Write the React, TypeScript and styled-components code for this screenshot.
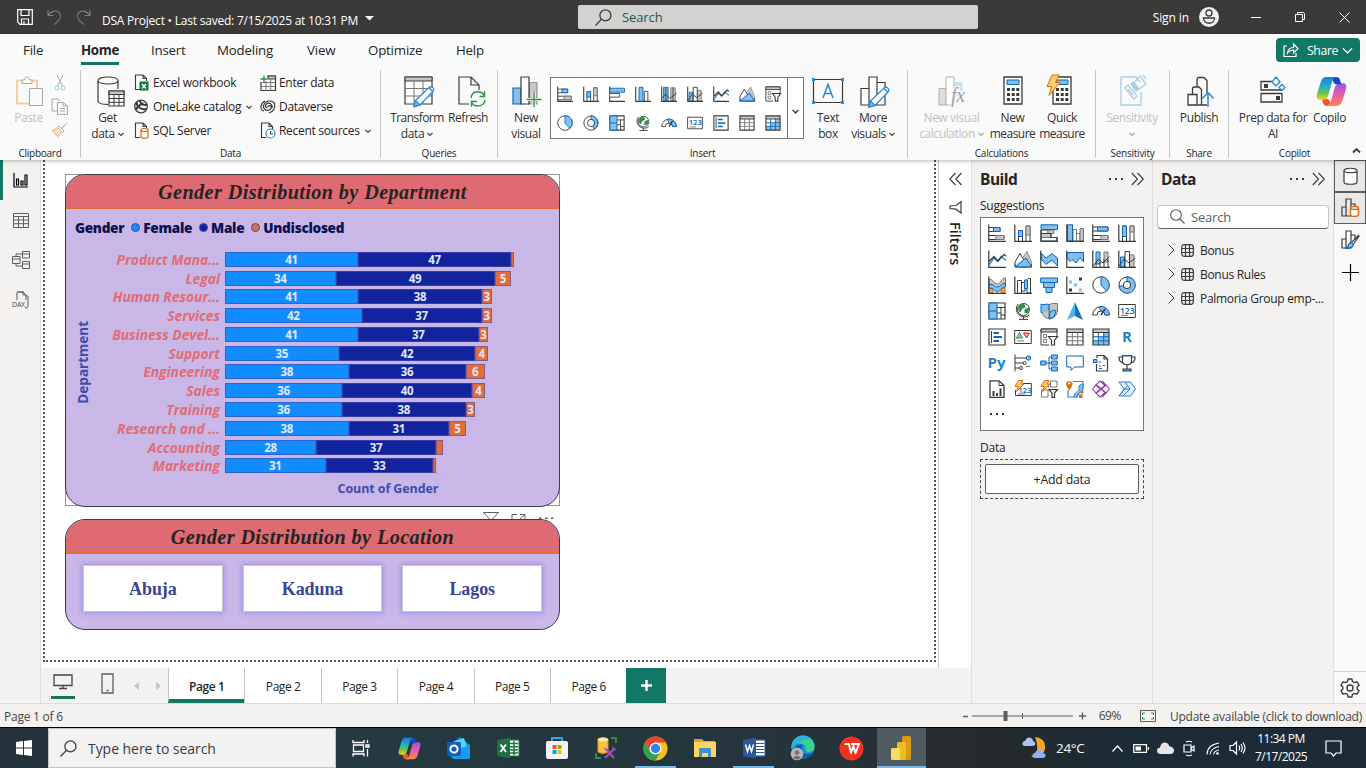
import React from "react";
import styled, { createGlobalStyle, css } from "styled-components";

const INK = "#3b3a39";
const BLUE = "#0f66b5";
const SKY = "#83beec";
const GREY = "#c8c6c4";
const TEAL = "#117865";
const ORANGE = "#d86f0e";
const GREEN = "#2f8f46";

const Global = createGlobalStyle`
  * { box-sizing: border-box; }
  body { margin: 0; overflow: hidden; background: #fff; }
  #root { font-family: "Open Sans", "Noto Sans", sans-serif; font-size: 12px; color: #252423; }
`;

const Window = styled.div`
  width: 1366px;
  height: 768px;
  display: flex;
  flex-direction: column;
  overflow: hidden;
  letter-spacing: -0.2px;
  white-space: nowrap;
`;

/* ---------- svg helpers ---------- */

type GlyphProps = { w: number; h?: number; vb?: string; children: React.ReactNode; sw?: number; color?: string };
const GlyphSvg = styled.svg`
  display: block;
  flex: none;
  overflow: visible;
`;
const Glyph = ({ w, h = w, vb, children, sw = 1, color = INK }: GlyphProps) => (
  <GlyphSvg width={w} height={h} viewBox={vb ?? `0 0 ${w} ${h}`} fill="none" stroke={color} strokeWidth={sw}>
    {children}
  </GlyphSvg>
);
const Axis = () => <path d="M.8 .5V17.300H18" stroke={INK} strokeWidth="1.200" />;
const Grid = ({ fill = false }: { fill?: boolean }) => (
  <>
    <path d="M1 1H17V4.500H1Z" fill={GREY} stroke="none" />
    {fill && <path d="M6.500 9H17V17H1V13H6.500ZM11.500 4.500H17V9H11.500Z" fill={SKY} stroke="none" />}
    <path d="M1 8.700H17M1 12.800H17M6.300 4.500V17M11.700 4.500V17" stroke={fill ? BLUE : "#797775"} />
    <path d="M1 4.500H17" />
    <path d="M1 1H17V17H1Z" strokeWidth="1.200" />
  </>
);
const Bolt = () => <path d="M4.500 .5H9L7 4H10L2.500 11.500 4.300 6.500H1Z" fill="#ffc966" stroke={ORANGE} />;
const num = (s: string, x: number, y: number, size: number, fill = BLUE, weight = 600) => (
  <text x={x} y={y} fontSize={size} fontFamily="Open Sans, sans-serif" fontWeight={weight} fill={fill} stroke="none" letterSpacing="0">{s}</text>
);

const viz: Record<string, React.ReactNode> = {
  stackedBar: <><Axis /><path d="M1 3.500H12V7.500H1" /><path d="M5.500 3.500H12V7.500H5.500Z" fill={SKY} stroke={BLUE} /><path d="M1 11.500H16V15.500H1" /><path d="M8 11.500H16V15.500H8Z" fill={GREY} stroke="#797775" /></>,
  stackedCol: <><Axis /><path d="M4.500 17V6.500H8.500V17" /><path d="M4.500 6.500H8.500V12.500H4.500Z" fill={SKY} stroke={BLUE} /><path d="M12 17V2H16V17" /><path d="M12 2H16V11H12Z" fill={GREY} stroke="#797775" /></>,
  clusterBar: <><Axis /><path d="M1 8.500H12V12.500H1" fill="#fff" /><path d="M1 2.500H17.500V7H1Z" fill={SKY} stroke={BLUE} /></>,
  clusterCol: <><Axis /><path d="M10.500 17V6H14.500V17" /><path d="M4.500 17V1.500H9V17Z" fill={SKY} stroke={BLUE} /></>,
  hBars: <><path d="M1 6H8V9.500H1ZM1 13.500H17V17H1Z" fill="#fff" /><path d="M8 6H14V9.500H8ZM1 9.500H11V13.500H1Z" fill={GREY} stroke="#797775" /><path d="M1 6V17.300H18M1 9.500H11V13.500H17V17" strokeWidth="1.200" /><path d="M1 .8H17.500V5.500H1Z" fill={SKY} stroke={BLUE} /></>,
  vBars: <><path d="M7 5.500H10.500V17H7ZM10.500 9.500H14V17H10.500Z" fill="#fff" stroke="#797775" /><path d="M14 4.500H17.500V17H14Z" fill={GREY} stroke="#797775" /><path d="M1.500 .8H6.500V17H1.500Z" fill={SKY} stroke={BLUE} /><Axis /></>,
  fullBar: <><Axis /><path d="M1 3H16V7H1M1 11.500H16V15.500H1" /><path d="M5.500 3H16V7H5.500Z" fill={SKY} stroke={BLUE} /><path d="M9 11.500H16V15.500H9Z" fill={GREY} stroke="#797775" /></>,
  fullCol: <><Axis /><path d="M4.500 17V2H8.500V17M12 17V2H16V17" /><path d="M4.500 2H8.500V12.500H4.500Z" fill={SKY} stroke={BLUE} /><path d="M12 2H16V8H12Z" fill={GREY} stroke="#797775" /></>,
  line: <><Axis /><path d="M1 15 6 8 9.500 11.500 13 6.500 18 10.500" stroke="#2b88d8" strokeWidth="1.300" /><path d="M1 11.500 6 6.500 10 11 16 4.500 18 6" strokeWidth="1.300" /></>,
  area: <><path d="M6 12 13 1 17.500 12V17H9Z" fill={GREY} stroke="#979593" /><path d="M1 16.500V12L6 3.500 12 14V16.500Z" fill="#fff" /><path d="M1 17 5 13.500 12 8 17.500 17Z" fill={SKY} stroke={BLUE} /><path d="M1 14V17H17.500V14" stroke={BLUE} /></>,
  stackedArea: <><path d="M1 3 6 8 12 3.500 17.500 8V16L12 10 6 14.500 1 9Z" fill={SKY} stroke={BLUE} /><Axis /></>,
  fullArea: <><path d="M1 2.500H17.500V12L14 7.500 10 13 6 9.500 4 11.500 1 7.500Z" fill={SKY} stroke={BLUE} /><Axis /></>,
  lineStack: <><path d="M4 2H8V14H4Z" fill={SKY} stroke={BLUE} /><path d="M12 2H16V12H12Z" fill={GREY} stroke="#797775" /><path d="M4 12V17M8 12V17M12 9V17M16 9V17" /><path d="M1 16 6.500 9 11 13 17.500 6.500" /><Axis /></>,
  lineClusterDark: <><path d="M3 1.500H8V17H3Z" fill={SKY} stroke={BLUE} /><path d="M11 2H16V17H11Z" fill={GREY} stroke="#797775" /><path d="M5.500 2V17M13.500 2V17M1 14 5 9 10 14 17.500 8" /><Axis /></>,
  lineCluster: <><path d="M2.500 7H6.500V17H2.500Z" fill={SKY} stroke={BLUE} /><path d="M11.500 5H16V17H11.500Z" fill={GREY} stroke="#797775" /><path d="M7 17V1.500H11.500V17" fill="#fff" /><path d="M1 16 6 9 11 13 17.500 8" /><Axis /></>,
  ribbon: <><path d="M1 3C5 3 6 8 9.500 8S13 2 17.500 2V8C13 9 13 13 9.500 13S6 9 1 8Z" fill={GREY} stroke="#797775" /><path d="M1 12H5V17H1ZM13 12H17V17H13Z" fill="#f2a34f" stroke={ORANGE} /><path d="M1 8C6 8 6 11 9.500 11S13 7 17.500 7V11C13 11 12 16 9.500 16S6 12 1 12Z" fill={SKY} stroke={BLUE} /><Axis /></>,
  waterfall: <><Axis /><path d="M3.500 17V4.500H7.500V17M7.500 6.500H11V15H8M14 2.500H16.500V17H13V3" /><path d="M10.500 4H13.500V12.500H10.500Z" fill={SKY} stroke={BLUE} /></>,
  funnel: <path d="M.7 2H17.500V6.500H.7ZM3.500 6.500H14.500V11.500H3.500ZM6 11.500H12V16.500H6Z" fill={SKY} stroke={BLUE} />,
  scatter: <><Axis /><path d="M13 1.500H16V4.500H13ZM3 12.500H6V15.500H3Z" fill={INK} stroke="none" /><path d="M3 4.500H6V7.500H3ZM8 7.500H11V10.500H8ZM13 12.500H16V15.500H13Z" fill={SKY} stroke="none" /></>,
  pie: <><circle cx="9" cy="9" r="8.200" fill="#fff" /><path d="M9 .8A8.200 8.200 0 0 1 14.500 15L9 9Z" fill={SKY} stroke={BLUE} /></>,
  donut: <><circle cx="9" cy="9" r="8" fill="#fff" /><path d="M9 .8A8.200 8.200 0 1 1 1 10L5.500 10A3.600 3.600 0 1 0 9 5.300Z" fill={SKY} stroke={BLUE} /><circle cx="9" cy="9" r="3.600" fill="#fff" /></>,
  donutLight: <><circle cx="9" cy="9" r="8" fill="#fff" /><path d="M9 .8A8.200 8.200 0 0 1 12.500 16L11 12.500A4 4 0 0 0 9 5Z" fill={SKY} stroke={BLUE} /><circle cx="9" cy="9" r="4" fill="#fff" /></>,
  treemap: <><path d="M1 1H17V17H1Z" fill="#fff" strokeWidth="1.200" /><path d="M1 1H9V17H1Z" fill={SKY} stroke={BLUE} /><path d="M1 9H9" stroke={BLUE} /><path d="M9 5.500H17M13 5.500V17M9 11H13M13 13H17" /></>,
  globe: <><circle cx="9.500" cy="7.500" r="6" fill="#fff" /><path d="M6 3 10 2.500 11 5 8 6.500 6 10 4.500 7ZM11 7.500 14.500 6 14 10 11 11Z" fill={GREEN} stroke={GREEN} /><path d="M4 2A8 8 0 0 0 15.500 13M9.500 15V17M5 17.400H14" /></>,
  shapeMap: <><path d="M9 3 12 1.500H17.500V9C17.500 13 13 17 9 17Z" fill={GREY} stroke="#797775" /><path d="M1 2C4 4 6 1 9 2.500V9L7 11 1 10.500Z" fill={SKY} stroke={BLUE} /><path d="M2 10.500C3 15 7 17 9 16L9 9" fill={GREY} stroke="#797775" /><path d="M9 17 10 10 14 8 16 9 14 15Z" fill={SKY} stroke={BLUE} /></>,
  arrow: <><path d="M9 0 17 18 9 14Z" fill="#0f78b8" stroke="none" /><path d="M9 0 1 18 9 14Z" fill="#4db4e6" stroke="none" /></>,
  gauge: <><path d="M.7 13A8.300 8.300 0 0 1 17.300 13H13A4 4 0 0 0 5 13Z" fill="#fff" /><path d="M7 4.800A8.300 8.300 0 0 1 17.300 13H13A4 4 0 0 0 9 9Z" fill={SKY} stroke={BLUE} /><path d="M9 13 13 7" strokeWidth="1.500" /></>,
  card: <><path d="M.7 2.500H17.300V15.500H.7Z" fill="#fff" />{num("123", 2, 11.500, 8.500)}<path d="M3 13.500H10" stroke="#797775" /></>,
  multiCard: <><path d="M1 1H17V17H1Z" fill="#fff" strokeWidth="1.200" /><path d="M3.500 3V15" /><path d="M5.500 5H11M5.500 9H14M5.500 13H11" stroke={BLUE} strokeWidth="1.800" /></>,
  kpi: <><path d="M.7 2.500H17.300V15.500H.7Z" fill="#fff" /><path d="M2.500 10 5.500 4.500 8.500 10Z" fill="#9bd3a7" stroke={GREEN} /><path d="M9.500 5H15.500L12.500 10Z" fill="#f5a3a3" stroke="#c4262e" /><path d="M3 13H10" stroke="#797775" /></>,
  slicer: <><path d="M9 17H1V1H17V8" /><path d="M1 1H17V4H1Z" fill={GREY} /><path d="M3.500 6.500H6.500V9.500H3.500ZM3.500 11.500H6.500V14.500H3.500Z" stroke="#797775" /><path d="M8.500 8.500H17.500L14.500 12.500V17H11.500V12.500Z" fill="#fff" strokeWidth="1.200" /></>,
  table: <Grid />,
  matrix: <Grid fill />,
  r: num("R", 4, 14, 15, "#1f84c7", 700),
  py: num("Py", -0.5, 14, 15, "#1f84c7", 700),
  influencer: <><path d="M1 .5V17.500" /><path d="M1 4H13M1 9H9M1 14H5" /><circle cx="14.500" cy="4" r="2.200" fill={SKY} stroke={BLUE} /><circle cx="10.500" cy="9" r="1.500" /><circle cx="7" cy="14" r="1.500" /><path d="M12 12.500H16" stroke="#797775" /></>,
  tree: <><path d="M6 9H9V3H11.500M9 9H11.500M9 9V15H11.500" stroke={BLUE} /><path d="M.7 7H6V11H.7ZM11.500 1H17.300V5H11.500ZM11.500 7H17.300V11H11.500ZM11.500 13H17.300V17H11.500Z" fill={SKY} stroke={BLUE} /></>,
  qna: <path d="M.7 2H17.300V13H8.500L5 16.500V13H.7Z" fill="#fff" stroke={BLUE} />,
  narrative: <><path d="M4.500 10V17H15.500V5L12 1.500H5V4M12 1.500V5H15.500" fill="#fff" strokeWidth="1.200" /><path d="M1.500 5.500H5V8.500H1.500Z" fill={SKY} stroke={BLUE} /><path d="M6.500 8H9M7 12H9M10.500 11.500H13M7 14.500H10" stroke={BLUE} /></>,
  trophy: <><path d="M4.500 1.500V7C4.500 12 13.500 12 13.500 7V1.500ZM4.500 3H1C1 7 2.500 8.500 5 8.800M13.500 3H17C17 7 15.500 8.500 13 8.800M9 11V15M5 17V15H13V17Z" fill="#fff" strokeWidth="1.200" /><path d="M4.500 1.800H13.500M5 16H13" stroke={BLUE} strokeWidth="1.500" /></>,
  report: <><path d="M2 .8H11L16 5.500V17.300H2Z" fill="#fff" strokeWidth="1.300" /><path d="M11 .8V5.500H16" /><path d="M5.500 16V11M9 16V13M12.500 16V8.500" strokeWidth="2" /></>,
  quickCard: <><path d="M9 3.500H17.300V15.500H1.500V10" fill="#fff" />{num("123", 4.5, 12.5, 7.5)}<path d="M4 14H11" stroke="#797775" /><Bolt /></>,
  quickSlicer: <><path d="M10.500 1H17V7H10.500ZM1.500 10H8V17H1.500ZM5 4H8.500V7.500" stroke="#797775" /><Bolt /><path d="M9 9.500H17.500L14.500 13V17.300H12V13Z" fill="#fff" strokeWidth="1.200" /></>,
  arcgis: <><path d="M7 1.500H17V9L13 13 11 17H2V10" stroke="#2b88d8" strokeWidth="1.200" /><path d="M8 17C7 12 14 12 13 8S17 4 17 4V10L12 14 11 17Z" fill={SKY} stroke="#2b88d8" /><path d="M0 3.500A3.400 3.400 0 0 1 6.600 3.500C6.600 6 3.300 10.500 3.300 10.500S0 6 0 3.500ZM14.500 11H17.500V13.500H14.500ZM13 14.500H16.500V18H13Z" fill={ORANGE} stroke="none" /><circle cx="3.300" cy="3.300" r="1.100" fill="#fff" stroke="none" /></>,
  powerApps: <g fill="#fbf3fc" stroke="#8d3f9e" strokeWidth="1.100" strokeLinejoin="round"><path d="M8 .8 13 5.500 8 10 3.500 5.500ZM10 .8 14.500 5.500 10 10 5.500 5.500" /><path d="M8 17.200 13 12.500 8 8 3.500 12.500ZM10 17.200 14.500 12.500 10 8 5.500 12.500" /><path d="M4 5 8.500 9 4 13 .5 9ZM14 5 17.500 9 14 13 9.500 9Z" /></g>,
  automate: <path d="M1 2H12.500L17.500 9 12.500 16H1L6 9ZM7 2 12 9 5 16M12 9 6 9M1 16 10 5" fill="#e3f0fc" stroke="#2b7cd3" />,
};
const Viz = ({ name, size }: { name: string; size: number }) => <Glyph w={size} vb="0 0 18 18">{viz[name]}</Glyph>;
const Chevron = ({ color = INK, size = 6, sw = 1.2 }: { color?: string; size?: number; sw?: number }) => (
  <Glyph w={size} h={size} vb="0 0 6 6" color={color} sw={sw}><path d="M.5 1.800 3 4.300 5.500 1.800" /></Glyph>
);
const DoubleChevron = ({ left = false }: { left?: boolean }) => (
  <Glyph w={13} h={14} vb="0 0 13 14" sw={1.1}>{left ? <path d="M6.500 1 .8 7 6.500 13M12.500 1 6.800 7 12.500 13" /> : <path d="M.8 1 6.500 7 .8 13M6.500 1 12.300 7 6.500 13" />}</Glyph>
);
const CopilotMark = ({ size }: { size: number }) => (
  <GlyphSvg width={size} height={size} viewBox="0 0 30 30">
    <defs>
      <linearGradient id="cpA" x1="0" y1="1" x2="0" y2="23" gradientUnits="userSpaceOnUse"><stop offset="0" stopColor="#1b7de8" /><stop offset=".4" stopColor="#1fb0c4" /><stop offset=".7" stopColor="#6cc24a" /><stop offset="1" stopColor="#f0cf1b" /></linearGradient>
      <linearGradient id="cpB" x1="0" y1="7" x2="0" y2="29" gradientUnits="userSpaceOnUse"><stop offset="0" stopColor="#9b57e8" /><stop offset=".5" stopColor="#e85aa8" /><stop offset="1" stopColor="#ff8a4a" /></linearGradient>
    </defs>
    <path d="M15 29H10.500Q7.500 29 6.700 26L5.500 22H10Q12.500 22 13.500 25Q14 29 15 29Z" fill="#f4562c" />
    <path d="M20 29H10Q13 28.500 14.200 25L18.500 10.500Q19.700 7 23 7H26Q30.500 7 29 12.500L25.500 24Q24 29 20 29Z" fill="url(#cpB)" />
    <path d="M15 1H19.500Q22.500 1 23.300 4L24.500 8H20Q17.500 8 16.500 5Q16 1 15 1Z" fill="#1748c4" />
    <path d="M10 1H20Q17 1.500 15.800 5L11.500 19.500Q10.300 23 7 23H4Q-.5 23 1 17.500L4.500 6Q6 1 10 1Z" fill="url(#cpA)" />
  </GlyphSvg>
);

/* ---------- title bar ---------- */

const TitleBar = styled.header`
  height: 34px;
  flex: none;
  background: #3b3a39;
  color: #fff;
  display: flex;
  align-items: center;
  padding-left: 17px;
`;
const QuickTools = styled.div`
  display: flex;
  align-items: center;
  gap: 14px;
  width: 85px;
`;
const FileTitle = styled.div`
  width: 476px;
  display: flex;
  align-items: center;
  gap: 7px;
  padding-top: 6px;
  letter-spacing: -0.22px;
`;
const Caret = styled.div`
  padding-bottom: 4px;
`;
const TitleSearch = styled.div`
  width: 400px;
  height: 24px;
  background: #d2d2d0;
  border-radius: 2px;
  color: #185c50;
  font-size: 13px;
  display: flex;
  align-items: center;
  gap: 10px;
  padding-left: 17px;
  letter-spacing: -0.1px;
`;
const SignIn = styled.div`
  width: 241px;
  display: flex;
  align-items: center;
  justify-content: flex-end;
  gap: 10px;
  letter-spacing: -0.1px;
`;
const WindowButtons = styled.div`
  display: flex;
  align-items: center;
  gap: 34px;
  margin-left: 32px;
`;

/* ---------- ribbon ---------- */

const RibbonArea = styled.div`
  height: 126px;
  flex: none;
  background: #fafafa;
  display: flex;
  flex-direction: column;
  position: relative;
  z-index: 2;
  box-shadow: 0 1px 4px rgba(0, 0, 0, 0.28);
`;
const TabRow = styled.nav`
  height: 34px;
  display: flex;
  align-items: flex-start;
  padding: 4px 6px 0 23px;
  gap: 32px;
  font-size: 13.3px;
`;
const Tab = styled.div<{ $w: number; $active?: boolean }>`
  width: ${(p) => p.$w}px;
  height: 27px;
  line-height: 24px;
  font-weight: ${(p) => (p.$active ? 700 : 400)};
  letter-spacing: ${(p) => (p.$active ? "-0.35px" : "-0.2px")};
  border-bottom: 3px solid ${(p) => (p.$active ? TEAL : "transparent")};
`;
const ShareButton = styled.div`
  margin-left: auto;
  width: 84px;
  height: 24px;
  border-radius: 4px;
  background: ${TEAL};
  color: #fff;
  display: flex;
  align-items: center;
  gap: 4px;
  padding-left: 7px;
  font-size: 12.3px;
  letter-spacing: -0.4px;
  > svg:first-child { margin-right: 4px; }
`;
const Groups = styled.div`
  flex: 1;
  display: flex;
  padding-top: 2px;
`;
const Group = styled.section<{ $w: number; $last?: boolean }>`
  width: ${(p) => p.$w}px;
  height: 88px;
  flex: none;
  display: flex;
  flex-direction: column;
  justify-content: space-between;
  ${(p) => !p.$last && css`border-right: 1px solid #c8c6c4;`}
`;
const GroupBody = styled.div<{ $pl: number }>`
  display: flex;
  padding-left: ${(p) => p.$pl}px;
`;
const GroupLabel = styled.div<{ $shift?: number }>`
  text-align: center;
  font-size: 10px;
  line-height: 10px;
  padding-right: ${(p) => p.$shift ?? 0}px;
  letter-spacing: -0.25px;
`;
const Big = styled.div<{ $w: number; $off?: boolean }>`
  width: ${(p) => p.$w}px;
  flex: none;
  display: flex;
  flex-direction: column;
  align-items: center;
  padding-top: 6px;
  line-height: 16px;
  text-align: center;
  font-size: 12px;
  letter-spacing: -0.4px;
  color: ${(p) => (p.$off ? "#c3c1bf" : "#323130")};
`;
const BigIcon = styled.div<{ $up?: number; $right?: number }>`
  height: 34px;
  padding-left: ${(p) => Math.max(0, p.$right ?? 0)}px;
  padding-right: ${(p) => Math.max(0, -(p.$right ?? 0))}px;
  > svg { margin-top: ${(p) => -(p.$up ?? 0)}px; }
`;
const Line = styled.div<{ $tight?: boolean }>`
  height: 16px;
  display: flex;
  align-items: center;
  justify-content: center;
  gap: 3px;
  letter-spacing: ${(p) => (p.$tight ? "-0.55px" : "inherit")};
`;
const SmallCol = styled.div<{ $w: number; $ml?: number }>`
  width: ${(p) => p.$w}px;
  margin-left: ${(p) => p.$ml ?? 0}px;
  display: flex;
  flex-direction: column;
`;
const SmallItem = styled.div`
  height: 24px;
  padding-top: 1px;
  display: flex;
  align-items: center;
  gap: 3px;
  letter-spacing: -0.3px;
  > svg:last-child:not(:first-child) { margin-left: 2px; }
`;
const Gallery = styled.div`
  margin: 7px 0 0 4px;
  width: 254px;
  height: 62px;
  border: 1px solid #797775;
  background: #fff;
  display: flex;
`;
const GalleryGrid = styled.div`
  width: 237px;
  border-right: 1px solid #797775;
  display: grid;
  grid-template-columns: repeat(9, 26px);
  grid-template-rows: 29px 29px;
  padding: 1px 0 0 1px;
  > * { place-self: center; }
`;
const GalleryMore = styled.div`
  flex: 1;
  display: grid;
  place-items: center;
  padding-top: 6px;
`;
const Collapse = styled.div`
  position: absolute;
  right: 5px;
  bottom: 6px;
`;

type BigButtonProps = { w: number; icon: React.ReactNode; lines: string[]; off?: boolean; menu?: boolean; up?: number; right?: number };
const BigButton = ({ w, icon, lines, off, menu, up, right }: BigButtonProps) => (
  <Big $w={w} $off={off}>
    <BigIcon $up={up} $right={right}>{icon}</BigIcon>
    {lines.map((l, i) => (
      <Line key={i} $tight={l === "Transform" || l === "measure"}>{l}{menu && i === lines.length - 1 && <Chevron color={off ? "#a19f9d" : INK} />}</Line>
    ))}
  </Big>
);

const Page16 = ({ children }: { children: React.ReactNode }) => (
  <Glyph w={16} h={17} vb="0 0 16 17"><path d="M6 15.500H1.500V1H9L12.500 4.500V7M9 1V4.500H12.500" strokeWidth="1.100" />{children}</Glyph>
);
const excelSmall = <Page16><path d="M5.500 7.500H14.500V16.500H5.500Z" fill="#107c41" stroke="none" /><path d="M8 10 12 14.500M12 10 8 14.500" stroke="#fff" strokeWidth="1.300" /></Page16>;
const sqlSmall = <Page16><path d="M7 8V14.500C7 17 14 17 14 14.500V8C14 6 7 6 7 8C7 10 14 10 14 8" fill="#fff" stroke={ORANGE} strokeWidth="1.200" /></Page16>;
const recentSmall = <Page16><circle cx="10.500" cy="11.500" r="4.500" fill="#fff" stroke="#2b88d8" strokeWidth="1.200" /><path d="M10.500 9V12H13" /></Page16>;
const lakeSmall = <Glyph w={16} h={15} vb="0 0 16 15" sw={1.3}><circle cx="7" cy="7.500" r="6.300" /><path d="M2.500 3C2.500 8 7.500 11 12.500 10M5.500 1.500C7.500 6 8.500 6 13 6M1.500 11C4.500 6 6.500 5 9.500 4.500" strokeWidth="2" /></Glyph>;
const enterSmall = <Glyph w={16} h={16}><path d="M7 1H15.500V15.500H1V7" strokeWidth="1.200" /><path d="M8 1H15.500V4H8Z" fill={GREY} /><path d="M1.500 7.500H15.500M1.500 11.500H15.500M6 6V15.500M10.700 4V15.500" stroke="#797775" /><path d="M4 .5V7.500M.5 4H7.500" stroke={GREEN} strokeWidth="1.300" /></Glyph>;
const verseSmall = <Glyph w={16} h={15} vb="0 0 16 15" sw={1.2}><path d="M8 7.500C10 5 13 8 10 10.500C6 13 2 9 4 5.500C6 1 13 1 14.500 4.500C16 9 12 14 9 13.500M8 7.500C6 10 4.500 7 6.500 5C9 3 13 5 12 9M4 12C-1 11 .5 4 5 2" /></Glyph>;

const pasteIcon = <Glyph w={28} h={32} color="#a8a6a4"><path d="M7 4.500H1V27.500H14" stroke="#f5cf9f" strokeWidth="2" /><path d="M15 4.500H21V12" stroke="#f5cf9f" strokeWidth="2" /><path d="M6 7.500V4H8.500C8.500 0 13.500 0 13.500 4H16V7.500Z" fill="#fff" /><path d="M13.500 12.500H26.500V29.500H13.500Z" fill="#fafafa" /></Glyph>;
const getDataIcon = <Glyph w={28} h={32} sw={1.2}><path d="M11 28.500C5 28.500 1 27 1 25V4.500C1 2.500 5 1 11 1S21 2.500 21 4.500 17 8 11 8 1 6.500 1 4.500M21 4.500V13" /><path d="M12 15H27V30H12Z" fill="#fff" /><path d="M12 15H27V18.500H12Z" fill={GREY} /><path d="M12 22.500H27M12 26.300H27M17 18.500V30M22 18.500V30" strokeWidth="1" /></Glyph>;
const Pencil = ({ x = 0, y = 0 }: { x?: number; y?: number }) => (
  <g transform={`translate(${x} ${y})`} stroke="#2b88d8" strokeWidth="1.300">
    <path d="M0 20 1.500 14 15 1C18-1 21 2 19 5L6 18.500ZM15 1.500 18.500 5" fill="#fff" />
    <path d="M0 20 1.500 14 6 18.500Z" fill="#83beec" />
  </g>
);
const transformIcon = <Glyph w={31} h={32}><path d="M1 1H28V28H1Z" fill="#fff" strokeWidth="1.200" /><path d="M1 1H28V5H1Z" fill={GREY} /><path d="M1 12.500H28M1 20H28M10 5V28M19 5V28" stroke="#797775" /><Pencil x={10} y={10.5} /></Glyph>;
const refreshIcon = <Glyph w={29} h={32} sw={1.2}><path d="M12 28H2V1H14L22 9V14M14 1V9H22" /><g stroke={GREEN} strokeWidth="1.400"><path d="M14 22C15 14 25 14 27.500 20M27.500 15V20.500H22.500M28 24C27 31 17 32 14.500 26M14.500 30.500V25.500H20" /></g></Glyph>;
const newVisualIcon = <Glyph w={30} h={32} sw={1.2}><path d="M17 6.500H25V28H17Z" fill={GREY} stroke="#979593" /><path d="M1 12H9V28H1Z" fill={SKY} stroke={BLUE} /><path d="M9 1H17V28H9Z" fill="#fff" /><path d="M22 16V31M14.500 23.500H29.500" stroke="#fff" strokeWidth="3" /><path d="M22 16V31M14.500 23.500H29.500" stroke={GREEN} strokeWidth="1.400" /></Glyph>;
const textBoxIcon = <Glyph w={32} h={32}><path d="M1.500 3.500H30.500V26.500H1.500Z" strokeWidth="1.200" /><path d="M11 22 16 8.500 21 22M12.800 17.500H19.200" stroke="#2b88d8" strokeWidth="1.500" /><path d="M0 2H3V5H0ZM29 2H32V5H29ZM0 25H3V28H0ZM29 25H32V28H29Z" fill="#2b88d8" stroke="none" /></Glyph>;
const moreVisualsIcon = <Glyph w={30} h={32} sw={1.2}><path d="M1 12.500H9V29H1ZM9 1H17V29H9ZM17 6.500H25V29H17Z" fill="#fff" /><Pencil x={9} y={11} /></Glyph>;
const calcVisualIcon = <Glyph w={28} h={32} color="#b3b0ad"><path d="M1 12.500H8V29H1Z" fill="#e1dfdd" /><path d="M16 6.500H24V20H16Z" fill="#c7e0f4" stroke="#c7e0f4" /><path d="M8 1H16V29H8Z" fill="#fff" /><text x="13" y="26" fontFamily="Liberation Serif, serif" fontStyle="italic" fontSize="20" fill="#a19f9d" stroke="#fafafa" strokeWidth="2.500" paintOrder="stroke">fx</text></Glyph>;
const Calculator = () => <><path d="M1 1H19V28H1Z" fill="#fff" strokeWidth="1.300" /><path d="M4 4H16V8.500H4Z" fill={SKY} stroke={BLUE} /><path d="M4 12H7V15H4ZM8.700 12H11.700V15H8.700ZM13.300 12H16.300V15H13.300ZM4 17H7V20H4ZM8.700 17H11.700V20H8.700ZM13.300 17H16.300V20H13.300ZM4 22H7V25H4ZM8.700 22H11.700V25H8.700ZM13.300 22H16.300V25H13.300Z" fill={INK} stroke="none" /></>;
const measureIcon = <Glyph w={20} h={32}><Calculator /></Glyph>;
const quickIcon = <Glyph w={27} h={34}><g transform="translate(6 2)"><Calculator /></g><path d="M6 0H13L9.500 7.500H14L3 20.500 5.500 11.500H1Z" transform="translate(0 1)" fill="#ffcf70" stroke={ORANGE} /></Glyph>;
const sensitivityIcon = <Glyph w={28} h={34} color="#a9cfe6" sw={1.3}><path d="M15 3H1V31H21V18" /><path d="M5 14 8 11 17 22 14 25ZM8 15 13 21M14 9 19 15 26 10 20 2ZM15 2 20 8M23 1 26 5" /><path d="M13 8 19 15 16 17 11 10Z" fill="#a9cfe6" /></Glyph>;
const publishIcon = <Glyph w={28} h={34} sw={1.3}><path d="M1 29V18.500H10V29ZM5.500 18.500V13Q5.500 11 7.500 11H12L14.500 13.500V29M10 29H20M10 11V4Q10 1.500 12 1.500H17L20 4.500V17" /><path d="M21 31V17M15.500 22.500 21 16.500 26.500 22.500" stroke="#2b88d8" strokeWidth="1.500" /></Glyph>;
const prepIcon = <Glyph w={26} h={32} sw={1.3}><path d="M12 5.500H1V14H22M1 17.500H22V26H1Z" /><path d="M4 8H8V12H4ZM16 20H20V24H16Z" fill={INK} stroke="none" /><path d="M16 1 20 6 16 10 12 6ZM22 8.500 25 11.500 22 14.500 19 11.500Z" fill="#fafafa" stroke="#2b88d8" /></Glyph>;

const galleryIcons = ["stackedBar", "stackedCol", "clusterBar", "clusterCol", "lineClusterDark", "lineCluster", "line", "area", "slicer", "pie", "donutLight", "treemap", "globe", "gauge", "card", "multiCard", "table", "matrix"];
const tabs: [string, number][] = [["File", 26], ["Home", 38], ["Insert", 34], ["Modeling", 58], ["View", 29], ["Optimize", 56], ["Help", 28]];

const Ribbon = () => (
  <RibbonArea>
    <TabRow>
      {tabs.map(([t, w]) => <Tab key={t} $w={w} $active={t === "Home"}>{t}</Tab>)}
      <ShareButton>
        <Glyph w={16} color="#fff" sw={1.2}><path d="M4 4H1V14.500H13V11M4.500 11C5 7 7.500 5.500 10.500 5.500V2L15 6.500 10.500 11V8C8 8 6 9 4.500 11Z" /></Glyph>
        Share<Chevron color="#fff" size={11} sw={0.7} />
      </ShareButton>
    </TabRow>
    <Groups>
      <Group $w={81}>
        <GroupBody $pl={6}>
          <BigButton w={45} off lines={["Paste"]} icon={pasteIcon} right={3} />
          <SmallCol $w={20}>
            <SmallItem><Glyph w={18} color="#a8a6a4"><path d="M6 1 11.500 12M12 1 6.500 12" /><circle cx="6" cy="14" r="2" stroke="#9cc8e8" /><circle cx="12" cy="14" r="2" stroke="#9cc8e8" /></Glyph></SmallItem>
            <SmallItem><Glyph w={18} color="#a8a6a4"><path d="M6 13H1V1H7L9 3M6.500 4.500H12L16.500 8V16.500H6.500ZM12 4.500V8H16.500M9 10.500H14M9 13H14" /></Glyph></SmallItem>
            <SmallItem><Glyph w={18} color="#a8a6a4"><path d="M16.500 1 11 6M8 4 13 9 11.500 10.500 6.500 5.500Z" fill="#fff" /><path d="M6.500 6 1.500 9 7 14.500 10.500 10" fill="#fbe3c4" stroke="#f3c48c" strokeWidth="1.500" /></Glyph></SmallItem>
          </SmallCol>
        </GroupBody>
        <GroupLabel>Clipboard</GroupLabel>
      </Group>
      <Group $w={300}>
        <GroupBody $pl={5}>
          <BigButton w={43} menu lines={["Get", "data"]} icon={getDataIcon} right={7} />
          <SmallCol $w={125} $ml={5}>
            <SmallItem>{excelSmall}Excel workbook</SmallItem>
            <SmallItem>{lakeSmall}OneLake catalog<Chevron /></SmallItem>
            <SmallItem>{sqlSmall}SQL Server</SmallItem>
          </SmallCol>
          <SmallCol $w={120} $ml={1}>
            <SmallItem>{enterSmall}Enter data</SmallItem>
            <SmallItem>{verseSmall}Dataverse</SmallItem>
            <SmallItem>{recentSmall}Recent sources<Chevron /></SmallItem>
          </SmallCol>
        </GroupBody>
        <GroupLabel>Data</GroupLabel>
      </Group>
      <Group $w={117}>
        <GroupBody $pl={8}>
          <BigButton w={56} menu lines={["Transform", "data"]} icon={transformIcon} right={4} />
          <BigButton w={46} lines={["Refresh"]} icon={refreshIcon} right={6} />
        </GroupBody>
        <GroupLabel>Queries</GroupLabel>
      </Group>
      <Group $w={410}>
        <GroupBody $pl={8}>
          <BigButton w={40} lines={["New", "visual"]} icon={newVisualIcon} right={2} />
          <Gallery>
            <GalleryGrid>{galleryIcons.map((g) => <Viz key={g} name={g} size={16} />)}</GalleryGrid>
            <GalleryMore><Chevron size={7} /></GalleryMore>
          </Gallery>
          <BigButton w={48} lines={["Text", "box"]} icon={textBoxIcon} />
          <BigButton w={42} menu lines={["More", "visuals"]} icon={moreVisualsIcon} right={3} />
        </GroupBody>
        <GroupLabel>Insert</GroupLabel>
      </Group>
      <Group $w={188}>
        <GroupBody $pl={8}>
          <BigButton w={71} off menu lines={["New visual", "calculation"]} icon={calcVisualIcon} />
          <BigButton w={51} lines={["New", "measure"]} icon={measureIcon} />
          <BigButton w={48} lines={["Quick", "measure"]} icon={quickIcon} up={2} right={-5} />
        </GroupBody>
        <GroupLabel>Calculations</GroupLabel>
      </Group>
      <Group $w={74}>
        <GroupBody $pl={8}><BigButton w={56} off menu lines={["Sensitivity", ""]} icon={sensitivityIcon} up={2} right={4} /></GroupBody>
        <GroupLabel>Sensitivity</GroupLabel>
      </Group>
      <Group $w={59}>
        <GroupBody $pl={6}><BigButton w={46} lines={["Publish"]} icon={publishIcon} right={4} /></GroupBody>
        <GroupLabel>Share</GroupLabel>
      </Group>
      <Group $w={137} $last>
        <GroupBody $pl={9}>
          <BigButton w={70} lines={["Prep data for", "AI"]} icon={prepIcon} />
          <BigButton w={43} lines={["Copilo"]} icon={<CopilotMark size={31} />} right={3} />
        </GroupBody>
        <GroupLabel $shift={6}>Copilot</GroupLabel>
      </Group>
    </Groups>
    <Collapse><Glyph w={9} h={7} sw={1.8}><path d="M1 5.500 4.500 2 8 5.500" /></Glyph></Collapse>
  </RibbonArea>
);

/* ---------- workspace ---------- */

const Workspace = styled.main`
  height: 543px;
  flex: none;
  display: flex;
  background: #f3f2f1;
`;
const LeftRail = styled.aside`
  width: 41px;
  border-right: 1px solid #e1dfdd;
  display: flex;
  flex-direction: column;
`;
const RailItem = styled.div<{ $active?: boolean }>`
  height: 40px;
  display: grid;
  place-items: center;
  padding-right: 2px;
  border-left: 3px solid ${(p) => (p.$active ? TEAL : "transparent")};
`;
const Center = styled.div`
  width: 930px;
  display: flex;
  flex-direction: column;
`;
const CanvasRow = styled.div`
  height: 508px;
  display: flex;
  background: #fff;
`;
const Canvas = styled.div`
  width: 893px;
  height: 502px;
  margin-left: 2px;
  border: 2px dotted #555;
  border-top: 0;
  padding: 14px 0 0 20px;
`;
const FilterPane = styled.div`
  width: 33px;
  margin-left: 2px;
  border-left: 1px solid #c8c6c4;
  display: flex;
  flex-direction: column;
  align-items: center;
  padding-top: 12px;
  gap: 15px;
`;
const FilterTitle = styled.div`
  writing-mode: vertical-rl;
  font-weight: 600;
  font-size: 14.5px;
  letter-spacing: 0;
  line-height: 16px;
  margin-top: -7px;
`;
const Frame = styled.div`
  width: 495px;
  height: 332px;
  border: 1px solid #979593;
`;
const Visual = styled.section<{ $h: number }>`
  width: 495px;
  height: ${(p) => p.$h}px;
  border: 1px solid #3d3a4a;
  border-radius: 20px;
  overflow: hidden;
  background: #c8b7e7;
  display: flex;
  flex-direction: column;
`;
const ChartVisual = styled(Visual)`
  margin: -1px;
`;
const VisualTitle = styled.h2`
  margin: 0;
  height: 34px;
  flex: none;
  background: #de6a73;
  border-bottom: 2px solid #e66c37;
  color: #252423;
  font: italic bold 20.2px/34px "Liberation Serif", serif;
  letter-spacing: 0.4px;
  text-align: center;
`;
const Legend = styled.div`
  display: flex;
  align-items: center;
  height: 36px;
  padding-left: 9px;
  color: #0c1150;
  font-size: 13.6px;
  font-weight: 800;
  letter-spacing: -0.3px;
`;
const LegendKey = styled.span<{ $c: string }>`
  display: flex;
  align-items: center;
  margin-left: 7px;
  gap: 3px;
  &::before {
    content: "";
    box-sizing: border-box;
    width: 9px;
    height: 9px;
    border-radius: 50%;
    border: 1px solid #3a48b0;
    background: ${(p) => p.$c};
  }
`;
const Plot = styled.div`
  display: flex;
  padding-top: 5px;
`;
const YTitle = styled.div`
  width: 34px;
  display: flex;
  align-items: center;
  justify-content: center;
  > span {
    writing-mode: vertical-rl;
    transform: rotate(180deg);
    color: #3f4bb0;
    font-weight: 700;
    font-size: 13.5px;
    letter-spacing: 0;
  }
`;
const Rows = styled.div`
  display: grid;
  grid-template-rows: repeat(12, 18.77px);
`;
const BarRow = styled.div`
  display: flex;
  align-items: center;
`;
const Category = styled.div`
  width: 120px;
  margin-right: 5px;
  text-align: right;
  color: #e06c75;
  font-size: 13.8px;
  font-weight: 700;
  font-style: italic;
  line-height: 17px;
  letter-spacing: 0;
`;
const Bar = styled.div<{ $c: string; $edge: string }>`
  height: 15px;
  background: ${(p) => p.$c};
  border: 1px solid ${(p) => p.$edge};
  color: #e4e8fb;
  font-size: 11.5px;
  font-weight: 700;
  line-height: 14px;
  letter-spacing: -0.3px;
  text-align: center;
`;
const XTitle = styled.div`
  padding: 5px 0 0 151px;
  text-align: center;
  color: #3f4bb0;
  font-size: 12.5px;
  font-weight: 700;
  letter-spacing: -0.1px;
`;
const VisualTools = styled.div`
  height: 13px;
  overflow: hidden;
  width: 495px;
  display: flex;
  justify-content: flex-end;
  gap: 12px;
  padding: 6px 6px 0 0;
`;
const Tiles = styled.div`
  display: flex;
  gap: 20px;
  padding: 11px 17px;
`;
const Tile = styled.div`
  width: 140px;
  height: 47px;
  background: #fff;
  border: 1px solid #c8c6d0;
  box-shadow: 0 0 5px 1px #9d8de0;
  color: #3a4494;
  display: grid;
  place-items: center;
  padding-top: 2px;
  font: bold 18px "Liberation Serif", serif;
  letter-spacing: -0.1px;
`;

const data: [string, number, number, number][] = [
  ["Product Mana...", 41, 47, 1], ["Legal", 34, 49, 5], ["Human Resour...", 41, 38, 3], ["Services", 42, 37, 3],
  ["Business Devel...", 41, 37, 3], ["Support", 35, 42, 4], ["Engineering", 38, 36, 6], ["Sales", 36, 40, 4],
  ["Training", 36, 38, 3], ["Research and ...", 38, 31, 5], ["Accounting", 28, 37, 2], ["Marketing", 31, 33, 1],
];
const UNIT = 3.25;
const Report = () => (
  <Canvas>
    <Frame>
      <ChartVisual $h={333}>
        <VisualTitle>Gender Distribution by Department</VisualTitle>
        <Legend>Gender<LegendKey $c="#118dff">Female</LegendKey><LegendKey $c="#12239e">Male</LegendKey><LegendKey $c="#e66c37">Undisclosed</LegendKey></Legend>
        <Plot>
          <YTitle><span>Department</span></YTitle>
          <Rows>
            {data.map(([name, f, m, u]) => (
              <BarRow key={name}>
                <Category>{name}</Category>
                <Bar $c="#118dff" $edge="#2f63cf" style={{ width: f * UNIT }}>{f}</Bar>
                <Bar $c="#12239e" $edge="#3a3fa8" style={{ width: m * UNIT }}>{m}</Bar>
                <Bar $c="#e66c37" $edge="#8a5a80" style={{ width: u * UNIT }}>{u > 2 ? u : ""}</Bar>
              </BarRow>
            ))}
          </Rows>
        </Plot>
        <XTitle>Count of Gender</XTitle>
      </ChartVisual>
    </Frame>
    <VisualTools>
      <Glyph w={16} h={14} color="#605e5c"><path d="M.5 .500H15.500L9.500 7V12L6.500 13.500V7Z" /></Glyph>
      <Glyph w={15} h={14} color="#605e5c"><path d="M6 2.500H1V13H12V8M9 2.500H14V7M14 2.500 8 8" /></Glyph>
      <Glyph w={16} h={14} color="#605e5c"><path d="M1 5.500H3.500V8H1ZM7 5.500H9.500V8H7ZM13 5.500H15.500V8H13Z" fill="#605e5c" stroke="none" /></Glyph>
    </VisualTools>
    <Visual $h={111}>
      <VisualTitle>Gender Distribution by Location</VisualTitle>
      <Tiles><Tile>Abuja</Tile><Tile>Kaduna</Tile><Tile>Lagos</Tile></Tiles>
    </Visual>
  </Canvas>
);

const PageBar = styled.div`
  height: 35px;
  display: flex;
`;
const Devices = styled.div`
  width: 127px;
  flex: none;
  display: flex;
  align-items: flex-start;
  padding: 5px 0 0 10px;
`;
const Device = styled.div<{ $w: number; $active?: boolean }>`
  width: ${(p) => p.$w}px;
  height: 26px;
  display: flex;
  justify-content: center;
  border-bottom: 3px solid ${(p) => (p.$active ? TEAL : "transparent")};
`;
const Arrows = styled.div`
  display: flex;
  gap: 17px;
  padding-top: 9px;
  margin-left: -5px;
`;
const PageTab = styled.div<{ $active?: boolean }>`
  width: 76.4px;
  flex: none;
  background: #fff;
  border-left: 1px solid #c8c6c4;
  border-bottom: ${(p) => (p.$active ? `4px solid ${TEAL}` : "0")};
  text-align: center;
  line-height: 37px;
  letter-spacing: -0.45px;
  font-weight: ${(p) => (p.$active ? 600 : 400)};
`;
const AddPage = styled.div`
  width: 40px;
  background: ${TEAL};
  display: grid;
  place-items: center;
`;

/* ---------- side panes ---------- */

const Pane = styled.aside<{ $w: number }>`
  width: ${(p) => p.$w}px;
  flex: none;
  border-left: 1px solid #e1dfdd;
  padding-top: 7px;
`;
const PaneHead = styled.div`
  height: 24px;
  display: flex;
  align-items: center;
  padding: 0 8px 0 8px;
  h3 {
    margin: 0 auto 0 0;
    font-size: 15.5px;
    font-weight: 700;
    letter-spacing: -0.5px;
  }
`;
const DotsBox = styled.span`
  margin-right: 7px;
`;
const MoreDots = () => (
  <DotsBox><Glyph w={15} h={2}><path d="M0 0H2V2H0ZM6 0H8V2H6ZM12 0H14V2H12Z" fill={INK} stroke="none" /></Glyph></DotsBox>
);
const PaneLabel = styled.div<{ $mt: number }>`
  margin: ${(p) => p.$mt}px 0 0 8px;
  line-height: 18px;
  letter-spacing: -0.25px;
`;
const VizBox = styled.div`
  margin: 2px 0 0 8px;
  width: 164px;
  height: 214px;
  border: 1px solid #797775;
  background: #fff;
  padding: 2px 0 0 3px;
  display: grid;
  grid-template-columns: repeat(6, 26px);
  grid-template-rows: repeat(8, 26px);
  > * { place-self: center; }
`;
const DropZone = styled.div`
  margin: 2px 0 0 8px;
  width: 164px;
  height: 40px;
  border: 1px dashed #484644;
  padding: 4px;
`;
const AddData = styled.div`
  height: 30px;
  border: 1px solid #605e5c;
  border-radius: 2px;
  background: #fff;
  text-align: center;
  line-height: 29px;
  font-size: 12.3px;
`;
const DataSearch = styled.div`
  margin: 14px 0 0 4px;
  width: 172px;
  height: 24px;
  background: #fff;
  border: 1px solid #c8c6c4;
  border-bottom-color: #605e5c;
  border-radius: 4px;
  display: flex;
  align-items: center;
  gap: 6px;
  padding: 0 0 1px 12px;
  color: #605e5c;
  font-size: 13px;
`;
const TreeRow = styled.div`
  height: 24px;
  display: flex;
  align-items: center;
  padding-left: 15px;
  gap: 6px;
  letter-spacing: -0.3px;
`;
const TreeList = styled.div`
  padding-top: 9px;
`;
const RightRail = styled.aside`
  width: 33px;
  flex: none;
  border-left: 1px solid #e1dfdd;
  display: flex;
  flex-direction: column;
  background: #faf9f8;
`;
const RailTool = styled.div<{ $on?: boolean }>`
  height: 32px;
  display: grid;
  place-items: center;
  ${(p) => p.$on && css`border: 1px solid #605e5c; background: #e9e8e7;`}
`;
const Settings = styled.div`
  margin-top: auto;
  height: 32px;
  border-top: 1px solid #d2d0ce;
  display: grid;
  place-items: center;
`;

const buildIcons = [
  "stackedBar", "stackedCol", "hBars", "vBars", "fullBar", "fullCol",
  "line", "area", "stackedArea", "fullArea", "lineStack", "lineCluster",
  "ribbon", "waterfall", "funnel", "scatter", "pie", "donut",
  "treemap", "globe", "shapeMap", "arrow", "gauge", "card",
  "multiCard", "kpi", "slicer", "table", "matrix", "r",
  "py", "influencer", "tree", "qna", "narrative", "trophy",
  "report", "quickCard", "quickSlicer", "arcgis", "powerApps", "automate",
];
const Magnifier = ({ size, color = INK }: { size: number; color?: string }) => (
  <Glyph w={size} vb="0 0 16 16" color={color} sw={1.2}><circle cx="9.800" cy="6" r="5.200" /><path d="M6 9.800 .5 15.500" /></Glyph>
);

/* ---------- status bar and taskbar ---------- */

const StatusBar = styled.footer`
  height: 24px;
  flex: none;
  background: #f3f2f1;
  border-top: 1px solid #dcdad8;
  color: #484644;
  display: flex;
  align-items: center;
  padding: 2px 4px 0;
  letter-spacing: -0.24px;
`;
const Zoom = styled.div`
  margin-left: auto;
  display: flex;
  align-items: center;
  padding-bottom: 2px;
`;
const ZoomValue = styled.span`
  margin: 0 19px 0 13px;
  letter-spacing: -0.45px;
`;
const Update = styled.span`
  margin-left: 14px;
`;
const Taskbar = styled.div`
  height: 41px;
  flex: none;
  border-top: 1px solid #000;
  background: linear-gradient(90deg, #24333b, #253a41 25%, #26333b 60%, #262a2c 72%, #1c2c37 82%, #1c2b36);
  display: flex;
  color: #fff;
`;
const Start = styled.div`
  width: 48px;
  flex: none;
  display: grid;
  place-items: center;
`;
const TaskSearch = styled.div`
  width: 288px;
  flex: none;
  background: #f2f2f2;
  border: 1px solid #c4c4c4;
  color: #3c3c3c;
  display: flex;
  align-items: center;
  gap: 11px;
  padding-left: 11px;
  font-size: 14px;
  letter-spacing: -0.05px;
`;
const Apps = styled.div`
  display: flex;
  flex: none;
  width: 590px;
`;
const AppSlot = styled.div<{ $line?: boolean; $on?: boolean }>`
  width: 49.15px;
  flex: none;
  display: grid;
  place-items: center;
  padding-top: 2px;
  border-bottom: 2px solid transparent;
  ${(p) => p.$on && css`background: #4f5a61; box-shadow: inset 0 -2px 0 #76b9ed;`}
  ${(p) => p.$line && css`width: 41.15px; margin: 0 4px; box-shadow: inset 0 -2px 0 #76b9ed;`}
  ${(p) => (p.$on || p.$line) && css`border-bottom: 0; padding-bottom: 2px;`}
`;
const Tray = styled.div`
  flex: 1;
  display: flex;
  align-items: center;
  padding-left: 95px;
`;
const Slot = styled.div<{ $w: number }>`
  width: ${(p) => p.$w}px;
  flex: none;
  display: flex;
  justify-content: center;
`;
const Weather = styled.div`
  width: 56px;
  flex: none;
  font-size: 13.5px;
  letter-spacing: -0.3px;
  padding-left: 7px;
`;
const Clock = styled.div`
  width: 64px;
  flex: none;
  text-align: center;
  font-size: 12px;
  line-height: 18px;
  letter-spacing: -0.52px;
`;

const art = {
  taskView: <Glyph w={18} h={18} color="#fff" sw={1.3}><path d="M1 1V3.500H12V1M1.500 6H11.500V12.500H1.500ZM1 17.500V15H12V17.500M15.500 1V4M15.500 10V17.500M14 6H17V8H14Z" /></Glyph>,
  outlook: <Glyph w={25}><g stroke="none"><path d="M3 9 14 1 24 9V21Q24 23 22 23H7L3 19Z" fill="#1490df" /><path d="M6 4H20V14H6Z" fill="#50d9ff" transform="rotate(-20 13 9)" /><path d="M6 15 24 9V21Q24 23 22 23H8Z" fill="#1a9af0" /><rect x="1" y="6" width="14" height="14" rx="1.500" fill="#0f5fbf" /></g><circle cx="8" cy="13" r="3.600" stroke="#fff" strokeWidth="2" /></Glyph>,
  excel: <Glyph w={24} h={22}><path d="M12 3H23V19H12Z" fill="#fff" stroke="#1d7044" /><path d="M13 6.500H22M13 9.700H22M13 12.900H22M13 16H22M18 4V18" stroke="#1d7044" strokeWidth="1.500" /><path d="M1 3 14 .5V21.500L1 19Z" fill="#1d7044" stroke="none" /><path d="M4.500 7.500 10 15M10 7.500 4.500 15" stroke="#fff" strokeWidth="1.800" /></Glyph>,
  store: <Glyph w={24} h={24}><path d="M7 6V2H17V6" stroke="#29a9ea" strokeWidth="2" /><rect x="1" y="5" width="22" height="18" rx="2" fill="#f4f4f4" stroke="none" /><g stroke="none"><path d="M7.500 9H11.500V13H7.500Z" fill="#f25022" /><path d="M12.500 9H16.500V13H12.500Z" fill="#7fba00" /><path d="M7.500 14H11.500V18H7.500Z" fill="#00a4ef" /><path d="M12.500 14H16.500V18H12.500Z" fill="#ffb900" /></g></Glyph>,
  sql: <Glyph w={24}><path d="M4 3Q9 0 14 3V16Q9 19 4 16Z" fill="#f5c445" stroke="#d9a020" /><ellipse cx="9" cy="3.500" rx="5" ry="2" fill="#fde7a0" stroke="none" /><path d="M17 2H22V7M2 17V22H7" stroke="#3d8b3d" strokeWidth="1.800" /><path d="M11 22 20 13M12 13 20 22" stroke="#a04fc0" strokeWidth="2.200" /><path d="M18 11 22 14M10 12 14 15" stroke="#a04fc0" strokeWidth="1.500" /></Glyph>,
  chrome: <Glyph w={25}><g stroke="none"><circle cx="12.500" cy="12.500" r="12" fill="#fbc116" /><path d="M12.500 .5A12 12 0 0 0 2.100 6.500L7.300 15.500 12.500 6.500H22.900A12 12 0 0 0 12.500 .5Z" fill="#ea4335" /><path d="M2.100 6.500A12 12 0 0 0 12.500 24.500L17.700 15.500H7.300Z" fill="#31a350" /><circle cx="12.500" cy="12.500" r="6" fill="#fff" /><circle cx="12.500" cy="12.500" r="4.700" fill="#3f7ee8" /></g></Glyph>,
  files: <Glyph w={24} h={22}><g stroke="none"><path d="M1 2H9L11 4H22V20H1Z" fill="#e8a51c" /><path d="M1 5H23V20H1Z" fill="#fcd462" /><path d="M6 12Q6 11 7 11H17Q18 11 18 12V20H15V16H9V20H6Z" fill="#3a94dc" /></g></Glyph>,
  word: <Glyph w={24} h={22}><path d="M12 3H23V19H12Z" fill="#fff" stroke="#2b579a" /><path d="M14 6.500H22M14 9.500H22M14 12.500H22M14 15.500H22" stroke="#2b579a" /><path d="M1 3 14 .5V21.500L1 19Z" fill="#2b579a" stroke="none" /><path d="M3.500 7.500 5.500 14.500 7.500 8.500 9.500 14.500 11.500 7.500" stroke="#fff" strokeWidth="1.500" /></Glyph>,
  edge: <Glyph w={26}><g stroke="none"><circle cx="13" cy="12" r="11.500" fill="#1b8fd6" /><path d="M1.500 12A11.500 11.500 0 0 1 24.500 12Q24.500 17 19 17Q15 17 15.500 14.500Q16 8 9 8.500Q3.500 9 1.500 14Z" fill="#3bcf8f" /><path d="M1.500 12Q3 1 14 .7Q20 1 22 5Q14 2 9 8.500Q3.500 9 1.500 14Z" fill="#28b4dc" /><path d="M6 12Q6 20 14 23.500Q20 24 23 18Q15 21 12 16Q11 12 13 10Q7 9 6 12Z" fill="#0f5aa8" /><circle cx="7" cy="19" r="6.300" fill="#b8b6b4" /><circle cx="7" cy="17.500" r="2.300" fill="#757371" /><path d="M3 23Q7 18 11 23Q7 26 3 23Z" fill="#757371" /></g></Glyph>,
  wps: <Glyph w={25}><circle cx="12.500" cy="12.500" r="12" fill="#f5301c" stroke="none" /><path d="M5.500 8H10L12 17 14.500 10 16.500 17 20 8H12" stroke="#fff" strokeWidth="1.900" strokeLinejoin="round" /></Glyph>,
  powerbi: <Glyph w={22} h={26}><g stroke="none"><rect x="12" y="1" width="9" height="24" rx="1.500" fill="#d99a10" /><rect x="7" y="7" width="9" height="18" rx="1.500" fill="#eebd22" /><rect x="1" y="13" width="9" height="12" rx="1.500" fill="#f8dc5a" /></g></Glyph>,
  night: <Glyph w={26} h={25}><g stroke="none"><path d="M13 1Q24 2 23 13Q21 22 9 21Q19 17 13 1Z" fill="#f5a623" /><path d="M3 10Q0 10 .5 7Q1 5 3 5Q5 0 9 2Q11 3 11 5Q14 6 13 9Q12 10 10 10Z" fill="#a9c4f5" /><path d="M13 22Q10 22 10.500 19Q11 17 13 17Q15 13 19 14Q21 15 21 17Q24 18 23.500 20Q23 22 21 22Z" fill="#8fb2f0" /></g></Glyph>,
};

export default function App() {
  return (
    <>
      <Global />
      <Window>
        <TitleBar>
          <QuickTools>
            <Glyph w={16} color="#fff" sw={1.2}><path d="M.7 .7H15.300V15.300H3L.7 13ZM4 .7V6.500H12V.7M4.500 15V10H11.500V15M7 12V15" /></Glyph>
            <Glyph w={15} h={16} color="#807e7c" sw={1.2}><path d="M1 1V6.500H6.500M1 6.500C5 1 10 1 12.500 4S14 10 7.500 15.500" /></Glyph>
            <Glyph w={15} h={16} color="#807e7c" sw={1.2}><path d="M14 1V6.500H8.500M14 6.500C10 1 5 1 2.500 4S1 10 7.500 15.500" /></Glyph>
          </QuickTools>
          <FileTitle>
            DSA Project&nbsp;•&nbsp;Last saved: 7/15/2025 at 10:31 PM
            <Caret><Glyph w={9} h={5}><path d="M0 0H9L4.500 4.500Z" fill="#fff" stroke="none" /></Glyph></Caret>
          </FileTitle>
          <TitleSearch><Magnifier size={17} />Search</TitleSearch>
          <SignIn>
            Sign in
            <Glyph w={20} sw={1.3}><circle cx="10" cy="10" r="10" fill="#f0efee" stroke="none" /><circle cx="10" cy="6" r="3" /><path d="M4.500 11H15.500C15.500 18 4.500 18 4.500 11Z" /></Glyph>
          </SignIn>
          <WindowButtons>
            <Glyph w={10} h={10} color="#fff"><path d="M0 5.500H10" /></Glyph>
            <Glyph w={10} h={10} color="#fff"><path d="M.5 2.500H7.500V9.500H.5ZM2.500 2.500V.5H8.500L9.500 1.500V7.500H7.500" /></Glyph>
            <Glyph w={11} h={11} color="#fff"><path d="M.5 .5 10.500 10.500M10.500 .5 .5 10.500" /></Glyph>
          </WindowButtons>
        </TitleBar>
        <Ribbon />
        <Workspace>
          <LeftRail>
            <RailItem $active><Glyph w={15} color="#000" sw={1.2}><path d="M1 0V14H15M3.500 12V6H5.500V12ZM8 12V8H10V12ZM12 12V2H14V12Z" /></Glyph></RailItem>
            <RailItem><Glyph w={16} h={15} color="#605e5c"><path d="M.5 .5H15.500V14.500H.5ZM.5 3.500H15.500M.5 7H15.500M.5 10.700H15.500M5.500 3.500V14.500M10.500 3.500V14.500" /></Glyph></RailItem>
            <RailItem><Glyph w={18} h={18} color="#605e5c"><path d="M.5 5.500H8V12.500H.5ZM.5 8H8M10.500 .5H17.500V7H10.500ZM10.500 3H17.500M10.500 10.500H17.500V17.500H10.500ZM10.500 13H17.500M4 5.500V3H10.500M4 12.500V15H10.500" /></Glyph></RailItem>
            <RailItem><Glyph w={18} h={18} color="#605e5c"><path d="M5 9V1H11L14 4V9M11 1V4H14M6 1H12M14 5H16V15Q16 17 14 17H13" /><text x="0" y="16" fontSize="7" fontFamily="Open Sans, sans-serif" fill="#484644" stroke="none">DAX</text></Glyph></RailItem>
          </LeftRail>
          <Center>
            <CanvasRow>
              <Report />
              <FilterPane>
                <DoubleChevron left />
                <Glyph w={13} h={13} vb="0 0 13 13" sw={1.2}><path d="M12 .8V12L7 8.200 1 7.500V5L7 4.500Z" /></Glyph>
                <FilterTitle>Filters</FilterTitle>
              </FilterPane>
            </CanvasRow>
            <PageBar>
              <Devices>
                <Device $w={24} $active><Glyph w={20} h={16} color="#484644" sw={1.3}><path d="M1 2H19V12.500H1ZM10 12.500V15.500M6 15.500H14" /></Glyph></Device>
                <Device $w={64}><Glyph w={13} h={21} color="#605e5c" sw={1.3}><path d="M1 1H12V20H1ZM5.500 17.500H7.500" /></Glyph></Device>
                <Arrows>
                  <Glyph w={5} h={8}><path d="M5 0V8L0 4Z" fill="#c8c6c4" stroke="none" /></Glyph>
                  <Glyph w={5} h={8}><path d="M0 0V8L5 4Z" fill="#c8c6c4" stroke="none" /></Glyph>
                </Arrows>
              </Devices>
              {[1, 2, 3, 4, 5, 6].map((n) => <PageTab key={n} $active={n === 1}>Page {n}</PageTab>)}
              <AddPage><Glyph w={11} color="#fff" sw={2.4}><path d="M5.500 0V11M0 5.500H11" /></Glyph></AddPage>
            </PageBar>
          </Center>
          <Pane $w={181}>
            <PaneHead><h3>Build</h3><MoreDots /><DoubleChevron /></PaneHead>
            <PaneLabel $mt={6}>Suggestions</PaneLabel>
            <VizBox>
              {buildIcons.map((b) => <Viz key={b} name={b} size={18} />)}
              <Glyph w={18} h={6}><path d="M2 1H4V3H2ZM8 1H10V3H8ZM14 1H16V3H14Z" fill={INK} stroke="none" /></Glyph>
            </VizBox>
            <PaneLabel $mt={8}>Data</PaneLabel>
            <DropZone><AddData>+Add data</AddData></DropZone>
          </Pane>
          <Pane $w={181}>
            <PaneHead><h3>Data</h3><MoreDots /><DoubleChevron /></PaneHead>
            <DataSearch>
              <Glyph w={15} color="#605e5c" sw={1.1}><circle cx="6" cy="6" r="5.300" /><path d="M10 10 14.500 14.500" /></Glyph>Search
            </DataSearch>
            <TreeList>
              {["Bonus", "Bonus Rules", "Palmoria Group emp-..."].map((t) => (
                <TreeRow key={t}>
                  <Glyph w={7} h={12}><path d="M.5 .5 6 6 .5 11.500" /></Glyph>
                  <Glyph w={13} h={13} sw={1.2}><rect x=".7" y=".7" width="11.600" height="11.600" rx="2.500" /><path d="M.7 4.500H12.300M.7 8.500H12.300M4.500 .7V12.300M8.500 .7V12.300" /></Glyph>
                  {t}
                </TreeRow>
              ))}
            </TreeList>
          </Pane>
          <RightRail>
            <RailTool $on><Glyph w={15} h={18} sw={1.2}><path d="M1 3.500V15C1 18 14 18 14 15V3.500C14 .5 1 .5 1 3.500C1 6.500 14 6.500 14 3.500" fill="#fff" /></Glyph></RailTool>
            <RailTool $on><Glyph w={19} h={20} sw={1.2}><path d="M1 9H5V18H1ZM5 1H10V18H5ZM10 6H14V9" /><path d="M9.500 10V16.500C9.500 19 17.500 19 17.500 16.500V10C17.500 8 9.500 8 9.500 10C9.500 12 17.500 12 17.500 10" fill="#fff" stroke={ORANGE} strokeWidth="1.400" /></Glyph></RailTool>
            <RailTool><Glyph w={19} h={20} sw={1.2}><path d="M1 9H5V18H1ZM5 1H10V18H5ZM10 5H14V10" /><path d="M18 5 11 12M18.300 6 12.500 14" /><path d="M4 18.500Q7 18 7.500 15Q9 11.500 12 13.500Q13.500 18.500 4 18.500Z" fill={SKY} stroke={BLUE} /></Glyph></RailTool>
            <RailTool><Glyph w={17} color="#000" sw={1.2}><path d="M8.500 0V17M0 8.500H17" /></Glyph></RailTool>
            <Settings><Glyph w={20} sw={1.4}><circle cx="10" cy="10" r="3" /><path d="M8.200 1H11.800L12.500 3.500 14.500 4.600 17 3.900 19 7.100 17.200 9V11L19 12.900 17 16.100 14.500 15.400 12.500 16.500 11.800 19H8.200L7.500 16.500 5.500 15.400 3 16.100 1 12.900 2.800 11V9L1 7.100 3 3.900 5.500 4.600 7.500 3.500Z" /></Glyph></Settings>
          </RightRail>
        </Workspace>
        <StatusBar>
          Page 1 of 6
          <Zoom>
            <Glyph w={124} h={12} color="#605e5c"><path d="M1 6.500H6M117 6H124M120.500 2.500V9.500" strokeWidth="1.400" /><path d="M10 6H111M60.500 3V9" /><path d="M41.500 1H45.500V11H41.500Z" fill="#605e5c" stroke="none" /></Glyph>
            <ZoomValue>69%</ZoomValue>
            <Glyph w={16} h={12} color="#605e5c"><path d="M.5 .5H15.500V11.500H.5Z" /><path d="M2.500 5V3H5M11 3H13.500V5M13.500 7V9H11M5 9H2.500V7" stroke={GREEN} /></Glyph>
          </Zoom>
          <Update>Update available (click to download)</Update>
        </StatusBar>
        <Taskbar>
          <Start><Glyph w={16}><path d="M0 2 7 1V7.500H0ZM8 .9 16 0V7.500H8ZM0 8.500H7V15L0 14ZM8 8.500H16V16L8 15.100Z" fill="#fff" stroke="none" /></Glyph></Start>
          <TaskSearch><Magnifier size={17} />Type here to search</TaskSearch>
          <Apps>
            <AppSlot>{art.taskView}</AppSlot>
            <AppSlot><CopilotMark size={23} /></AppSlot>
            <AppSlot>{art.outlook}</AppSlot>
            <AppSlot>{art.excel}</AppSlot>
            <AppSlot>{art.store}</AppSlot>
            <AppSlot>{art.sql}</AppSlot>
            <AppSlot $line>{art.chrome}</AppSlot>
            <AppSlot>{art.files}</AppSlot>
            <AppSlot $line>{art.word}</AppSlot>
            <AppSlot>{art.edge}</AppSlot>
            <AppSlot>{art.wps}</AppSlot>
            <AppSlot $on>{art.powerbi}</AppSlot>
          </Apps>
          <Tray>
            <Slot $w={28}>{art.night}</Slot>
            <Weather>24°C</Weather>
            <Slot $w={24}><Glyph w={11} h={7} color="#fff" sw={1.2}><path d="M.5 6.500 5.500 1 10.500 6.500" /></Glyph></Slot>
            <Slot $w={24}><Glyph w={16} h={9} color="#fff" sw={1.2}><path d="M.7 .7H13.500V8.300H.7ZM15.300 3V6" /><path d="M2.500 2.500H8V6.500H2.500Z" fill="#fff" stroke="none" /></Glyph></Slot>
            <Slot $w={24}><Glyph w={17} h={12}><path d="M4 12Q0 12 0 8.500Q0 6 3 5.500Q4 .500 8 .500Q12 1 12 4Q17 5 17 8.500Q17 12 13 12Z" fill="#e6e6e6" stroke="none" /></Glyph></Slot>
            <Slot $w={24}><Glyph w={12} h={17} color="#fff" sw={1.2}><path d="M3 2Q6 .5 9 2M3 15Q6 16.500 9 15M1 5H8V12H1ZM8 8 11 6V11L8 9" /></Glyph></Slot>
            <Slot $w={24}><Glyph w={14} h={13} color="#fff" sw={1.1}><path d="M1 12.500Q1 3 13 1M4 12.500Q5 6 13 4.500M7.500 12.500Q8 9 13 8" /><circle cx="11.500" cy="11.500" r="1.300" fill="#fff" stroke="none" /></Glyph></Slot>
            <Slot $w={24}><Glyph w={17} h={14} color="#fff" sw={1.2}><path d="M1 4.500H4L7.500 1V13L4 9.500H1ZM10 4.500Q11.500 7 10 9.500M12 3Q14.500 7 12 11M14 1.500Q18 7 14 12.500" /></Glyph></Slot>
            <Clock>11:34 PM<br />7/17/2025</Clock>
            <Slot $w={40}><Glyph w={17} h={17} color="#fff" sw={1.2}><path d="M1 1H16V13H11L8.500 16 6 13H1Z" /></Glyph></Slot>
          </Tray>
        </Taskbar>
      </Window>
    </>
  );
}
